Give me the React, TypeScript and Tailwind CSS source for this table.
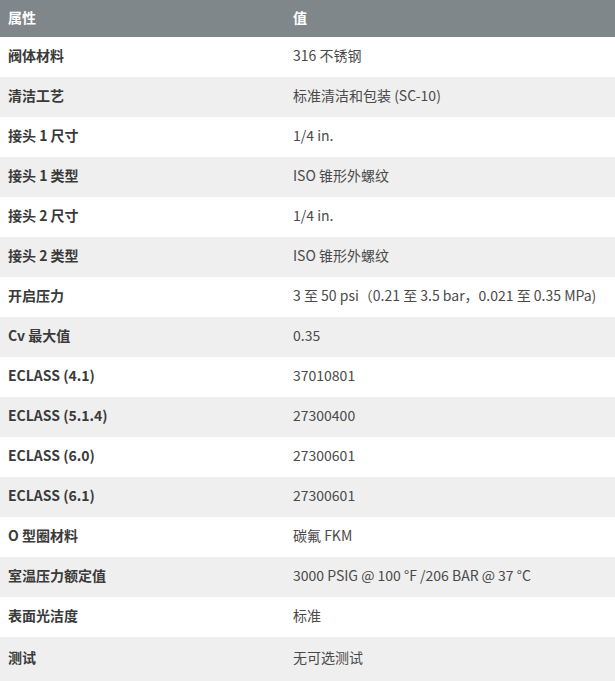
const rows: [string, string][] = [
  ["阀体材料", "316 不锈钢"],
  ["清洁工艺", "标准清洁和包装 (SC-10)"],
  ["接头 1 尺寸", "1/4 in."],
  ["接头 1 类型", "ISO 锥形外螺纹"],
  ["接头 2 尺寸", "1/4 in."],
  ["接头 2 类型", "ISO 锥形外螺纹"],
  ["开启压力", "3 至 50 psi（0.21 至 3.5 bar，0.021 至 0.35 MPa)"],
  ["Cv 最大值", "0.35"],
  ["ECLASS (4.1)", "37010801"],
  ["ECLASS (5.1.4)", "27300400"],
  ["ECLASS (6.0)", "27300601"],
  ["ECLASS (6.1)", "27300601"],
  ["O 型圈材料", "碳氟 FKM"],
  ["室温压力额定值", "3000 PSIG @ 100 °F /206 BAR @ 37 °C"],
  ["表面光洁度", "标准"],
  ["测试", "无可选测试"],
];

export default function App() {
  return (
    <div className="w-[615px] min-h-[681px] bg-[#efefef] font-['Noto_Sans_CJK_SC',sans-serif] text-[14px] text-[#4a4a4a]">
      <div className="flex h-[37px] items-center bg-[#80878b] pb-[3px] font-bold text-white">
        <div className="w-[285px] pl-2">属性</div>
        <div className="flex-1 pl-2">值</div>
      </div>
      {rows.map(([label, value], i) => (
        <div
          key={i}
          className={
            "flex items-center pb-[3px] " +
            (i === rows.length - 1 ? "h-[44px] " : "h-[40px] ") +
            (i % 2 === 0 ? "bg-white" : "bg-[#efefef]")
          }
        >
          <div className="w-[285px] pl-2 font-bold text-[#3a3a3a]">{label}</div>
          <div className="flex-1 pl-2">{value}</div>
        </div>
      ))}
    </div>
  );
}
